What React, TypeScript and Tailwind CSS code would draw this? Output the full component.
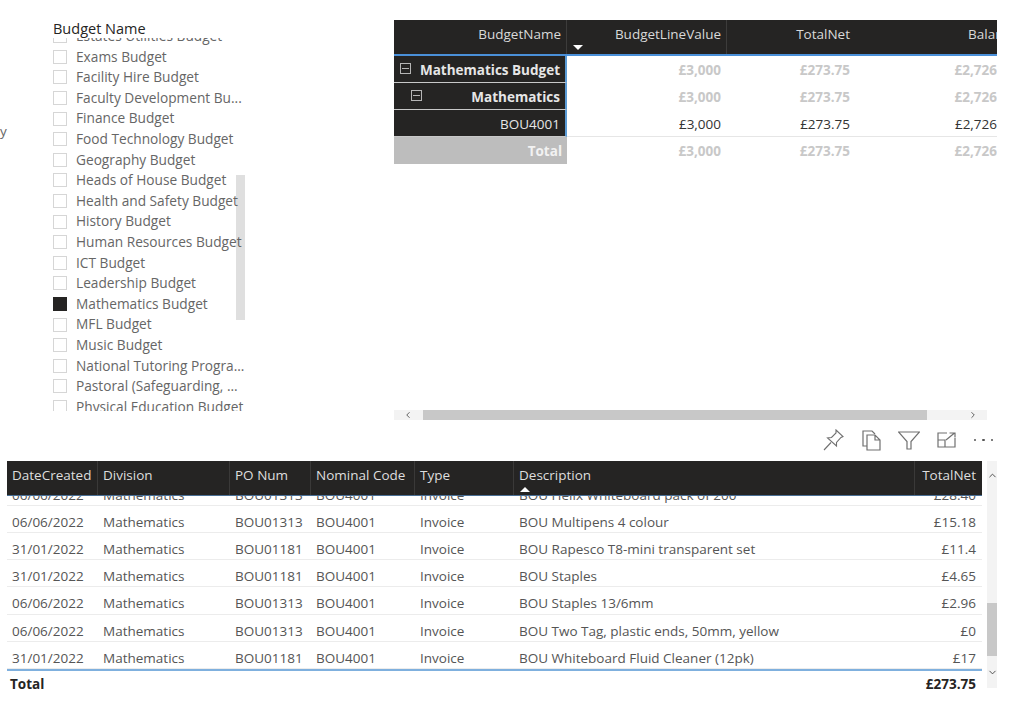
import { ChevronLeft, ChevronRight, ChevronUp, ChevronDown } from "lucide-react";

const slicerItems = [
    "Estates Utilities Budget",
    "Exams Budget",
    "Facility Hire Budget",
    "Faculty Development Bu...",
    "Finance Budget",
    "Food Technology Budget",
    "Geography Budget",
    "Heads of House Budget",
    "Health and Safety Budget",
    "History Budget",
    "Human Resources Budget",
    "ICT Budget",
    "Leadership Budget",
    "Mathematics Budget",
    "MFL Budget",
    "Music Budget",
    "National Tutoring Progra...",
    "Pastoral (Safeguarding, ...",
    "Physical Education Budget",
];

const detailRows = [
    ["06/06/2022", "BOU01313", "BOU Helix Whiteboard pack of 200", "£28.40"],
    ["06/06/2022", "BOU01313", "BOU Multipens 4 colour", "£15.18"],
    ["31/01/2022", "BOU01181", "BOU Rapesco T8-mini transparent set", "£11.4"],
    ["31/01/2022", "BOU01181", "BOU Staples", "£4.65"],
    ["06/06/2022", "BOU01313", "BOU Staples 13/6mm", "£2.96"],
    ["06/06/2022", "BOU01313", "BOU Two Tag, plastic ends, 50mm, yellow", "£0"],
    ["31/01/2022", "BOU01181", "BOU Whiteboard Fluid Cleaner (12pk)", "£17"],
];

const detailCols = "grid grid-cols-[91px_132px_81px_104px_99px_401px_67px]";

const Slicer = () => {
    return (
        <div className="relative w-[192px] h-[392px]">
            <div className="absolute left-[183px] top-[155px] w-[9px] h-[145px] bg-[#dfdfdf]" />
            <div className="h-[18px] text-[14.5px] leading-[18px] text-[#252423]">Budget Name</div>
            <div className="relative h-[373px] overflow-hidden">
                <div className="-mt-[12px]">
                    {slicerItems.map((item) => (
                        <div key={item} className="flex items-center h-[20.6px] gap-[9px] whitespace-nowrap text-[13.7px] text-[#666666]">
                            <span
                                className={
                                    item === "Mathematics Budget"
                                        ? "w-[14px] h-[14px] shrink-0 bg-[#252423] border border-[#252423]"
                                        : "w-[14px] h-[14px] shrink-0 border border-[#d6d6d6]"
                                }
                            />
                            {item}
                        </div>
                    ))}
                </div>
            </div>
        </div>
    );
};

const MatrixRow = ({ label, indent, bold, dark, muted }: { label: string; indent?: number; bold?: boolean; dark?: boolean; muted?: boolean }) => {
    const values = ["£3,000", "£273.75", "£2,726"];
    return (
        <div className="flex h-[27px]">
            <div
                className={
                    dark
                        ? "relative w-[173px] flex items-center justify-end pt-[2px] pr-[5px] bg-[#252423] border-b border-[#c8c8c8] border-r-2 border-r-[#5b9bd5] text-[#e6e6e6]"
                        : "w-[173px] flex items-center justify-end pt-[2px] pr-[5px] bg-[#bdbdbd] text-[#f2f2f2]"
                }
            >
                {indent !== undefined && (
                    <span className="absolute top-[7px] w-[11px] h-[11px] border border-[#b5b5b5] flex items-center justify-center" style={{ left: indent }}>
                        <span className="w-[7px] h-px bg-[#b5b5b5]" />
                    </span>
                )}
                <span className={bold ? "font-bold" : ""}>{label}</span>
            </div>
            <div className={muted ? "flex flex-1 pt-[2px] font-bold text-[#c8c8c8]" : "flex flex-1 pt-[2px] text-[#333333] border-b border-[#e6e6e6]"}>
                <div className="w-[154px] flex items-center justify-end">{values[0]}</div>
                <div className="w-[129px] flex items-center justify-end">{values[1]}</div>
                <div className="flex-1 flex items-center justify-end">{values[2]}</div>
            </div>
        </div>
    );
};

const Matrix = () => {
    return (
        <div className="w-[603px] h-[390px] overflow-hidden text-[13.5px]">
            <div className="flex h-[36px] bg-[#252423] border-b-2 border-[#4a90d9] text-[#d9d9d9]">
                <div className="w-[173px] flex items-center justify-end pb-[6px] pr-[5px] border-r border-[#3d3c3b]">BudgetName</div>
                <div className="relative w-[160px] flex items-center justify-end pb-[6px] pr-[5px] border-r border-[#3d3c3b]">
                    BudgetLineValue
                    <span className="absolute left-[6px] bottom-[4px] w-0 h-0 border-x-[5px] border-x-transparent border-t-[5px] border-t-white" />
                </div>
                <div className="w-[123px] flex items-center justify-end pb-[6px]">TotalNet</div>
                <div className="flex-1 flex items-center justify-end pb-[6px] overflow-hidden">
                    <span className="w-[29px] overflow-hidden whitespace-nowrap">Balance</span>
                </div>
            </div>
            <MatrixRow label="Mathematics Budget" indent={6} bold dark muted />
            <MatrixRow label="Mathematics" indent={17} bold dark muted />
            <MatrixRow label="BOU4001" dark />
            <MatrixRow label="Total" bold muted />
        </div>
    );
};

const HScroll = () => {
    return (
        <div className="flex items-center w-[593px] h-[10px] bg-[#f3f3f3] text-[#444444]">
            <ChevronLeft size={10} className="ml-[9px] shrink-0" />
            <div className="ml-[10px] w-[504px] h-full bg-[#c8c8c8]" />
            <ChevronRight size={10} className="ml-[41px] shrink-0" />
        </div>
    );
};

const VisualIcons = () => {
    return (
        <div className="flex items-center justify-end w-[603px] h-[22px] text-[#707070]">
            <svg width="21" height="22" viewBox="0 0 21 22" fill="none" stroke="currentColor" strokeWidth="1.1" className="mr-[18px]">
                <path d="M1 21 L8 13.5 M13 1 L20 7.5 L18 8.5 L13.5 13.5 L13.5 17 L4.5 9 L8.5 8.5 L13 4 Z" />
            </svg>
            <svg width="19" height="21" viewBox="0 0 19 21" fill="none" stroke="currentColor" strokeWidth="1.2" className="mr-[17px]">
                <path d="M5 16 H1 V1 H10 L13 4" />
                <path d="M5 5 H13 L18 10 V20 H5 Z M13 5 V10 H18" />
            </svg>
            <svg width="22" height="19" viewBox="0 0 22 19" fill="none" stroke="currentColor" strokeWidth="1.2" className="mr-[17px]">
                <path d="M0.5 1 H21.5 L13 10.5 V18 H9 V10.5 Z" />
            </svg>
            <svg width="19" height="16" viewBox="0 0 19 16" fill="none" stroke="currentColor" strokeWidth="1.2" className="mr-[18px]">
                <path d="M10 1 H1 V15 H18 V6" />
                <path d="M1 8 H8 V15 M9 8 L17.5 1 M12.5 1 H18 V5.5" />
            </svg>
            <span className="flex gap-[6px] mr-[4px]">
                <span className="w-[2.5px] h-[2.5px] rounded-full bg-[#555555]" />
                <span className="w-[2.5px] h-[2.5px] rounded-full bg-[#555555]" />
                <span className="w-[2.5px] h-[2.5px] rounded-full bg-[#555555]" />
            </span>
        </div>
    );
};

const DetailTable = () => {
    const heads = ["DateCreated", "Division", "PO Num", "Nominal Code", "Type", "Description"];
    return (
        <div className="flex w-[1024px] h-[228px] pl-[7px] text-[13.5px]">
            <div className="w-[975px]">
                <div className={`${detailCols} h-[35px] bg-[#252423] border-b border-[#4a6f94] text-[#dedede]`}>
                    {heads.map((head) => (
                        <div key={head} className="relative flex items-center pb-[6px] pl-[5px] border-r border-[#3a3938] whitespace-nowrap">
                            {head}
                            {head === "Description" && (
                                <span className="absolute left-[6px] bottom-[3px] w-0 h-0 border-x-[5px] border-x-transparent border-b-[5px] border-b-white" />
                            )}
                        </div>
                    ))}
                    <div className="flex items-center justify-end pb-[6px] pr-[6px]">TotalNet</div>
                </div>
                <div className="flex flex-col justify-end h-[175px] overflow-hidden border-b-2 border-[#7fb0de] text-[#555555]">
                    {detailRows.map((row) => (
                        <div key={row[2]} className={`${detailCols} shrink-0 h-[27.2px] items-center pt-[6px] border-b border-[#ececec] whitespace-nowrap`}>
                            <div className="pl-[5px]">{row[0]}</div>
                            <div className="pl-[5px]">Mathematics</div>
                            <div className="pl-[5px]">{row[1]}</div>
                            <div className="pl-[5px]">BOU4001</div>
                            <div className="pl-[5px]">Invoice</div>
                            <div className="pl-[5px]">{row[2]}</div>
                            <div className="text-right pr-[6px]">{row[3]}</div>
                        </div>
                    ))}
                </div>
                <div className="flex items-center justify-between h-[26px] pl-[3px] pr-[6px] font-bold text-[#252423]">
                    <span>Total</span>
                    <span>£273.75</span>
                </div>
            </div>
            <div className="relative ml-[5px] w-[10px] h-[227px] bg-[#f3f3f3] text-[#444444]">
                <ChevronUp size={11} className="absolute top-[9px] left-0" />
                <div className="absolute top-[142px] w-[10px] h-[53px] bg-[#c8c8c8]" />
                <ChevronDown size={11} className="absolute top-[206px] left-0" />
            </div>
        </div>
    );
};

export default function App() {
    return (
        <div className="w-[1024px] h-[714px] overflow-hidden bg-white pt-[20px] font-['Open_Sans',sans-serif]">
            <div className="flex h-[390px]">
                <div className="w-[53px] pt-[102px] text-[13.5px] leading-[18px] text-[#666666]">y</div>
                <Slicer />
                <div className="ml-[149px]">
                    <Matrix />
                </div>
            </div>
            <div className="pl-[394px]">
                <HScroll />
                <div className="mt-[9px]">
                    <VisualIcons />
                </div>
            </div>
            <div className="mt-[10px]">
                <DetailTable />
            </div>
        </div>
    );
}
